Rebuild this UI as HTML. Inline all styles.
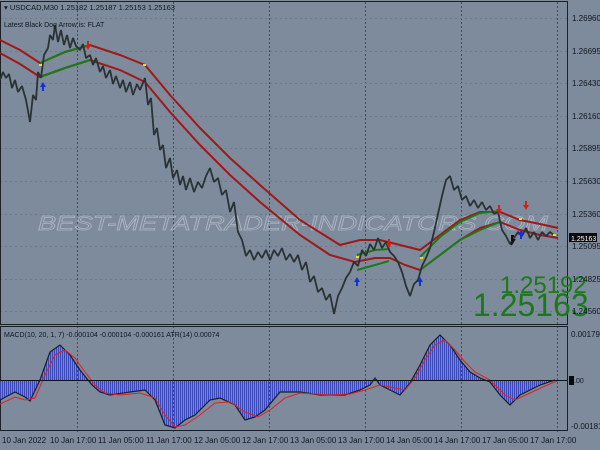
<!DOCTYPE html>
<html><head><style>
body{margin:0;width:600px;height:450px;background:#7e8b9c;overflow:hidden;font-family:"Liberation Sans",sans-serif}
svg{position:absolute;left:0;top:0}
text{font-family:"Liberation Sans",sans-serif;font-size:8px;fill:#101820}
</style></head><body>
<svg width="600" height="450" viewBox="0 0 600 450">
<defs>
<pattern id="hp" width="2" height="4" patternUnits="userSpaceOnUse"><rect width="1" height="4" fill="#3a48b8"/></pattern>
</defs>
<rect x="0" y="0" width="600" height="450" fill="#7e8b9c"/>
<g stroke="#2a3440" stroke-dasharray="2,2" stroke-width="1" opacity="0.7">
<line x1="77.5" y1="2" x2="77.5" y2="432"/><line x1="173.5" y1="2" x2="173.5" y2="432"/>
<line x1="269.5" y1="2" x2="269.5" y2="432"/><line x1="365.5" y1="2" x2="365.5" y2="432"/>
<line x1="461.5" y1="2" x2="461.5" y2="432"/><line x1="557.5" y1="2" x2="557.5" y2="432"/>
</g>
<g stroke="#6e7a8a" stroke-dasharray="2,3" stroke-width="1">
<line x1="0" y1="18.5" x2="567" y2="18.5"/><line x1="0" y1="51.5" x2="567" y2="51.5"/>
<line x1="0" y1="83.5" x2="567" y2="83.5"/><line x1="0" y1="116.5" x2="567" y2="116.5"/>
<line x1="0" y1="148.5" x2="567" y2="148.5"/><line x1="0" y1="181.5" x2="567" y2="181.5"/>
<line x1="0" y1="214.5" x2="567" y2="214.5"/><line x1="0" y1="246.5" x2="567" y2="246.5"/>
<line x1="0" y1="279.5" x2="567" y2="279.5"/><line x1="0" y1="311.5" x2="567" y2="311.5"/>
</g>
<rect x="0.5" y="1.5" width="567" height="323" fill="none" stroke="#1a1f28"/>
<rect x="0.5" y="326.5" width="567" height="104" fill="none" stroke="#1a1f28"/>
<text x="38" y="230" textLength="510" lengthAdjust="spacingAndGlyphs" style="font-size:20px;font-style:italic;fill:none;stroke:#b8c2d0;stroke-width:0.7;opacity:0.8">BEST-METATRADER-INDICATORS.COM</text>
<polyline fill="none" stroke="#a01818" stroke-width="2" points="0,40 20,50 40,63 65,52 90,45 120,55 145,65 170,95 200,128 230,158 260,185 300,220 340,245 360,240 380,240 400,245 420,250 440,235 460,220 480,212 500,212 520,220 540,224 558,228"/>
<polyline fill="none" stroke="#a01818" stroke-width="2" points="0,53 20,64 40,77 65,68 90,60 120,70 145,82 170,112 200,145 230,175 260,202 300,235 330,255 355,262 375,258 390,258 405,265 420,270 440,255 460,240 480,228 500,222 520,230 540,235 558,238"/>
<polyline fill="none" stroke="#1a7a1a" stroke-width="2" points="40,63 65,52 90,45"/>
<polyline fill="none" stroke="#1a7a1a" stroke-width="2" points="40,77 65,68 90,60"/>
<polyline fill="none" stroke="#1a7a1a" stroke-width="2" points="357,255 375,250 389,249"/>
<polyline fill="none" stroke="#1a7a1a" stroke-width="2" points="357,270 375,265 389,261"/>
<polyline fill="none" stroke="#1a7a1a" stroke-width="2" points="420,257 440,237 460,222 480,213 500,211"/>
<polyline fill="none" stroke="#1a7a1a" stroke-width="2" points="420,270 440,255 460,240 480,230 500,222"/>
<polyline fill="none" stroke="#2a3234" stroke-width="1.8" stroke-linejoin="bevel" points="0,80 3,72 6,78 9,74 12,88 15,80 18,92 22,86 26,100 30,122 33,95 36,100 38,72 41,78 44,55 48,48 50,35 53,40 55,25 58,42 61,30 64,45 67,35 70,48 73,38 76,46 80,50 83,44 86,58 90,55 93,65 96,58 100,72 103,66 106,78 110,70 113,84 116,76 120,88 123,80 126,92 130,82 133,95 137,84 140,90 145,78 148,105 151,98 154,135 157,128 160,150 163,145 166,168 170,158 173,178 177,170 180,185 183,176 186,190 190,178 194,192 198,182 202,188 206,176 210,168 214,182 218,178 222,195 226,190 230,212 234,202 238,232 242,240 246,256 250,250 254,260 258,252 262,258 266,250 270,260 274,250 278,256 282,248 286,260 290,254 294,262 298,255 302,270 306,262 310,282 314,276 318,292 322,288 326,300 330,294 334,314 338,296 342,288 346,278 350,272 354,262 358,266 362,250 366,256 370,244 374,250 378,238 382,248 386,242 390,252 394,256 398,262 402,272 406,286 410,296 414,284 418,280 422,266 426,258 430,248 434,232 438,214 442,196 446,180 450,176 454,190 458,186 462,200 466,196 470,206 474,200 478,208 482,202 486,210 490,206 494,214 498,212 502,230 506,236 510,244 514,238 518,232 522,236 526,228 530,238 534,232 538,240 542,232 546,236 550,232 555,236"/>
<path d="M43,82 l-3,5 h2 v4 h2 v-4 h2 z" fill="#1030e0"/>
<path d="M357,277 l-3,5 h2 v4 h2 v-4 h2 z" fill="#1030e0"/>
<path d="M420,277 l-3,5 h2 v4 h2 v-4 h2 z" fill="#1030e0"/>
<path d="M521,230 l-3,5 h2 v4 h2 v-4 h2 z" fill="#1030e0"/>
<path d="M88,50 l-3,-5 h2 v-4 h2 v4 h2 z" fill="#e01818"/>
<path d="M389,248 l-3,-5 h2 v-4 h2 v4 h2 z" fill="#e01818"/>
<path d="M499,214 l-3,-5 h2 v-4 h2 v4 h2 z" fill="#e01818"/>
<path d="M526,210 l-3,-5 h2 v-4 h2 v4 h2 z" fill="#e01818"/>
<path d="M511,245 l3,-5 h-2 v-4 h2" fill="none" stroke="#101010" stroke-width="2"/>
<g fill="#e8e020"><rect x="39" y="64" width="3" height="2"/><rect x="143" y="64" width="3" height="2"/><rect x="356" y="256" width="3" height="2"/><rect x="420" y="257" width="3" height="2"/><rect x="553" y="234" width="3" height="2"/><rect x="519" y="218" width="3" height="2"/></g>
<text x="500" y="293" style="font-size:24px;fill:#1a7a1a">1.25192</text>
<text x="473" y="316" style="font-size:32px;fill:#1a7a1a">1.25163</text>
<text x="4" y="10" style="font-size:7.5px">▾ USDCAD,M30  1.25182 1.25187 1.25153 1.25163</text>
<text x="4" y="27" style="font-size:7px">Latest Black Dog Arrow is:  FLAT</text>
<g style="font-size:7px">
<text x="572" y="21">1.26960</text><text x="572" y="54">1.26695</text><text x="572" y="86">1.26430</text>
<text x="572" y="119">1.26160</text><text x="572" y="151">1.25895</text><text x="572" y="184">1.25630</text>
<text x="572" y="217">1.25360</text><text x="572" y="249">1.25095</text><text x="572" y="282">1.24825</text>
<text x="572" y="314">1.24560</text>
<text x="571" y="337">0.001791</text><text x="571" y="429">-0.001811</text>
</g>
<rect x="569" y="233" width="28" height="9" fill="#0a0a0a"/>
<text x="571" y="241" style="font-size:7px;fill:#fff">1.25163</text>
<rect x="569" y="376" width="5" height="9" fill="#0a0a0a"/>
<text x="574" y="383" style="font-size:7px">.00</text>
<polygon fill="url(#hp)" points="0,380 0,400 15,392 25,397 30,401 40,380 50,352 60,345 70,355 80,370 92,385 100,392 110,395 130,392 145,390 155,400 165,425 175,428 185,420 195,415 210,400 220,398 235,405 245,420 255,417 265,410 280,392 300,392 320,395 345,395 360,390 370,385 375,378 380,385 390,390 400,395 410,383 420,365 430,345 440,335 450,345 460,360 470,372 480,378 490,382 500,395 510,405 520,395 530,390 540,385 555,380"/>
<polyline fill="none" stroke="#1a1f28" stroke-width="1.2" points="0,400 15,392 25,397 30,401 40,380 50,352 60,345 70,355 80,370 92,385 100,392 110,395 130,392 145,390 155,400 165,425 175,428 185,420 195,415 210,400 220,398 235,405 245,420 255,417 265,410 280,392 300,392 320,395 345,395 360,390 370,385 375,378 380,385 390,390 400,395 410,383 420,365 430,345 440,335 450,345 460,360 470,372 480,378 490,382 500,395 510,405 520,395 530,390 540,385 555,380"/>
<polyline fill="none" stroke="#e02020" stroke-width="1" points="0,404 15,397 25,400 35,398 45,375 55,355 65,350 75,358 85,372 95,385 105,393 120,395 140,393 155,398 165,415 175,427 185,425 200,415 215,403 230,402 245,412 258,417 270,410 285,398 300,393 330,395 350,394 365,390 380,385 395,388 405,390 415,378 425,360 435,345 445,340 455,350 465,362 475,372 490,380 505,395 515,400 530,393 545,386 557,381"/>
<line x1="0" y1="380.5" x2="567" y2="380.5" stroke="#101418"/>
<text x="4" y="337" style="font-size:7px">MACD(10, 20, 1, 7) -0.000104 -0.000104 -0.000161  ATR(14) 0.00074</text>
<g style="font-size:7px">
<text x="2" y="443">10 Jan 2022</text><text x="50" y="443">10 Jan 17:00</text><text x="98" y="443">11 Jan 05:00</text>
<text x="146" y="443">11 Jan 17:00</text><text x="194" y="443">12 Jan 05:00</text><text x="242" y="443">12 Jan 17:00</text>
<text x="290" y="443">13 Jan 05:00</text><text x="338" y="443">13 Jan 17:00</text><text x="386" y="443">14 Jan 05:00</text>
<text x="434" y="443">14 Jan 17:00</text><text x="482" y="443">17 Jan 05:00</text><text x="530" y="443">17 Jan 17:00</text>
</g>
</svg>
</body></html>
